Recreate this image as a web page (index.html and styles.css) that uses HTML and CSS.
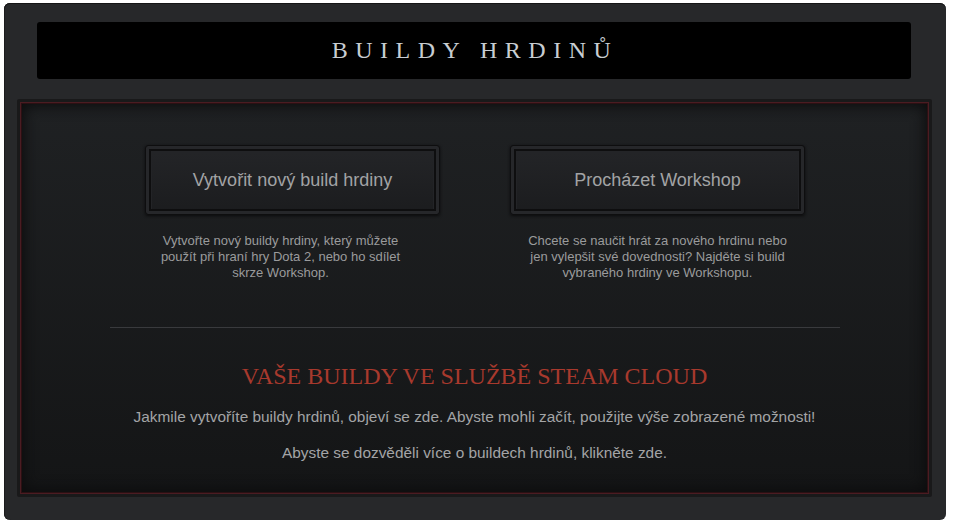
FILE: index.html
```html
<!DOCTYPE html>
<html lang="cs">
<head>
<meta charset="UTF-8">
<meta name="viewport" content="width=device-width, initial-scale=1.0">
<title>Buildy hrdinů</title>
<link rel="stylesheet" href="styles.css">
</head>
<body>

<div class="panel">
    <!-- title bar -->
    <div class="title-bar">
        <h1 class="title">BUILDY HRDINŮ</h1>
    </div>

    <!-- framed content -->
    <div class="frame">
        <div class="actions">
            <div class="action">
                <button class="btn">Vytvořit nový build hrdiny</button>
                <p class="action-desc action-desc-create">Vytvořte nový buildy hrdiny, který můžete použít při hraní hry Dota 2, nebo ho sdílet skrze Workshop.</p>
            </div>
            <div class="action">
                <button class="btn">Procházet Workshop</button>
                <p class="action-desc">Chcete se naučit hrát za nového hrdinu nebo jen vylepšit své dovednosti? Najděte si build vybraného hrdiny ve Workshopu.</p>
            </div>
        </div>

        <div class="divider"></div>

        <h2 class="cloud-title">VAŠE BUILDY VE SLUŽBĚ STEAM CLOUD</h2>
        <p class="cloud-text">Jakmile vytvoříte buildy hrdinů, objeví se zde. Abyste mohli začít, použijte výše zobrazené možnosti!</p>
        <p class="cloud-text cloud-more">Abyste se dozvěděli více o buildech hrdinů, klikněte zde.</p>
    </div>
</div>

</body>
</html>
```

FILE: styles.css
```css
body {
    margin: 0;
    padding: 3px 0 0 4px;
    background: #fff;
    font-family: "Liberation Sans", Arial, sans-serif;
}

.panel {
    width: 942px;
    height: 517px;
    box-sizing: border-box;
    padding: 19px 14px 23px 13px;
    background: #27282a;
    border-radius: 6px;
    box-shadow: inset 0 1px 0 #151516, inset 1px 0 0 #1c1c1d;
    display: flex;
    flex-direction: column;
}

.title-bar {
    height: 57px;
    margin: 0 21px 0 20px;
    background: #000;
    border-radius: 3px;
    display: flex;
    align-items: center;
    justify-content: center;
}

.title {
    margin: 0 0 0 2px;
    font-family: "Liberation Serif", "Times New Roman", serif;
    font-weight: normal;
    font-size: 24px;
    letter-spacing: 7.5px;
    color: #c8cdd2;
}

.frame {
    margin-top: 20px;
    height: 398px;
    box-sizing: border-box;
    border: 3px solid #19191a;
    border-radius: 2px;
    padding-top: 43px;
    background: linear-gradient(#1f2123, #141516);
    box-shadow:
        inset 0 0 0 1px #4b1c22,
        inset 0 0 0 2px #2a1013,
        inset 0 0 14px 4px #0c0c0d;
}

.actions {
    display: flex;
    justify-content: center;
    gap: 70px;
    padding-left: 1px;
}

.action {
    width: 295px;
    display: flex;
    flex-direction: column;
    align-items: center;
}

/* bevelled button: outer rim, dark inner line, dark face */
.btn {
    width: 295px;
    height: 70px;
    border: 1px solid #0e0e0f;
    border-radius: 3px;
    background: linear-gradient(#242528, #1b1c1e);
    box-shadow:
        inset 0 0 0 3px #26272a,
        inset 0 0 0 5px #0e0e0f,
        inset 0 1px 0 6px #232427,
        0 1px 3px #0b0b0c;
    font-family: "Liberation Sans", Arial, sans-serif;
    font-size: 18px;
    padding-top: 1px;
    color: #a2a3a5;
    cursor: pointer;
}

.action-desc {
    width: 262px;
    margin: 18px 0 0;
    font-size: 13px;
    line-height: 16px;
    text-align: center;
    color: #9a9b9c;
}

.action-desc-create {
    margin-right: 24px;
}

.divider {
    width: 730px;
    height: 1px;
    margin: 46px auto 0;
    background: #393a3d;
}

.cloud-title {
    margin: 33px 0 0;
    font-family: "Liberation Serif", "Times New Roman", serif;
    font-weight: normal;
    font-size: 24px;
    line-height: 30px;
    text-align: center;
    color: #a8392d;
}

.cloud-text {
    margin: 16px 0 0;
    font-size: 15.4px;
    line-height: 20px;
    text-align: center;
    color: #a3a4a6;
}

.cloud-more {
    margin-top: 16px;
}
```
